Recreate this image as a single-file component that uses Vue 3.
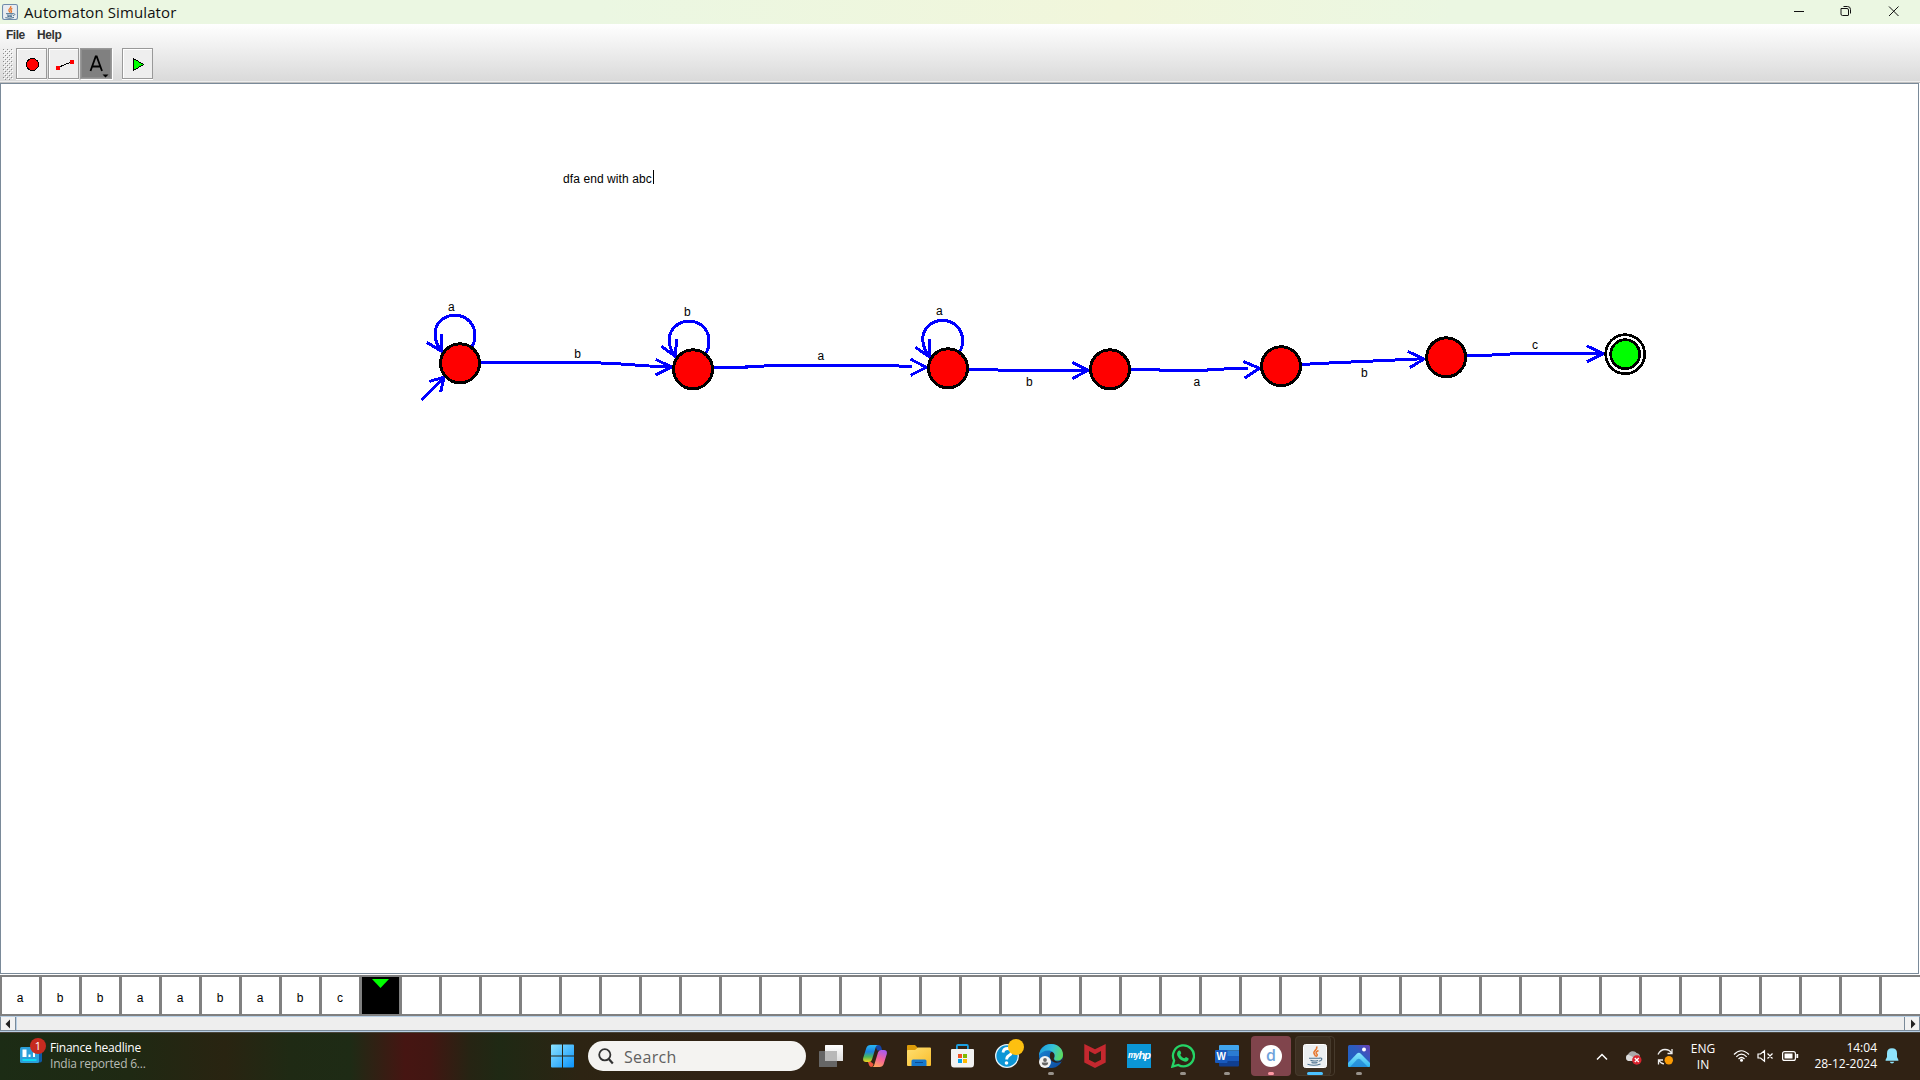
<script setup>
const nodes = [
  { x: 460, y: 363.3 },
  { x: 693, y: 369.3 },
  { x: 948, y: 368.3 },
  { x: 1110, y: 369.3 },
  { x: 1281, y: 366.2 },
  { x: 1446.2, y: 357.3 },
]

const edges = [
  'M481 362.4H586L614 363.5L650 366L672 367M656.5 359.4L672 367L656 375',
  'M714 367.6H747V366.5L779 365.6H890L913 366.6M911.3 359.2L927 367.3L911.3 375.3',
  'M969 369.4H993L1003 370.5H1088M1073 362.5L1088.5 370.3L1073 378.7',
  'M1131 369.4H1158L1162 370.5H1200L1228 368.8L1249 368.4M1244 361.5L1260 368.2L1245.5 378',
  'M1302 364.5L1326 363.2L1424.5 358.7M1408.6 351.5L1424.5 359L1410.5 367.7',
  'M1467 355.5H1484L1520 353.5H1604M1587.5 345.9L1604 353.7L1587.5 361.7',
  'M422.5 399.8L444.5 377.5M430 381.4L444.7 377.3L441.3 392.3',
]

const loops = [
  { x: 455.5, y: 335, head: 'M427.5 342.4L442.3 351.3L442.6 334.3' },
  { x: 689.7, y: 341, head: 'M662 346.2L676 356.3L677.3 339.3' },
  { x: 943.2, y: 340.2, head: 'M916 347.2L930 356.6L930.6 339.3' },
]

const labels = [
  { t: 'a', x: 448, y: 311 },
  { t: 'b', x: 574.3, y: 358 },
  { t: 'b', x: 684, y: 316 },
  { t: 'a', x: 817.5, y: 360 },
  { t: 'a', x: 936, y: 315 },
  { t: 'b', x: 1026, y: 386 },
  { t: 'a', x: 1193.5, y: 386 },
  { t: 'b', x: 1361, y: 377 },
  { t: 'c', x: 1532, y: 349 },
]

const tape = [...'abbaababc', 'head', ...Array(38).fill('')]
</script>

<template>
  <div class="screen">
    <header class="titlebar">
      <svg class="java" width="16" height="16" viewBox="0 0 24 24">
        <rect x=".8" y=".8" width="22.4" height="22.4" rx="2.5" fill="#e9edf1" stroke="#6f8cab" stroke-width="1.6" />
        <path d="M13 3c2 3-4 4-2.500 7 .5 1.200 1.500 1.800 1.200 3M15.500 6.500c-3 1.500-3 2.500-1.500 4 .8 1-.2 2-1 2.500" fill="none" stroke="#e8762c" stroke-width="2" />
        <path d="M6 14.500h11M7.500 16.500q4 1.200 8 0M8 18.500q4 1.200 7 0M5 20.500q7 2 13-.3M17 14.500c3-.5 3 2.500-.5 3" fill="none" stroke="#4d7390" stroke-width="1.500" />
      </svg>
      <span class="title">Automaton Simulator</span>
      <svg class="winctl" width="130" height="24" viewBox="0 0 130 24" fill="none" stroke="#111">
        <path d="M14 11.500h10" />
        <path d="M62.500 8.500h5q1.500 0 1.500 1.500v5q0 .5-.5.500h-5.500q-1.500 0-1.500-1.500v-5.500z" transform="translate(-.5 0)" />
        <path d="M63.500 6.500h4q3 0 3 3v4" />
        <path d="M109 6.500l9.500 9.500M118.500 6.500l-9.500 9.500" />
      </svg>
    </header>

    <div class="chrome">
      <nav class="menu"><span class="file">File</span><span class="help">Help</span></nav>
      <div class="toolbar">
        <svg class="grip" width="10" height="31" viewBox="0 0 10 31">
          <defs>
            <pattern id="dots" width="4" height="4" patternUnits="userSpaceOnUse">
              <rect width="1" height="1" fill="#8a8a8a" /><rect x="2" y="2" width="1" height="1" fill="#8a8a8a" />
              <rect x="1" y="1" width="1" height="1" fill="#fff" /><rect x="3" y="3" width="1" height="1" fill="#fff" />
            </pattern>
          </defs>
          <rect width="10" height="31" fill="url(#dots)" />
        </svg>
        <div class="tool">
          <svg width="29" height="29" viewBox="0 0 29 29"><circle cx="15.500" cy="15.500" r="6" fill="#f00" stroke="#000" shape-rendering="crispEdges" /></svg>
        </div>
        <div class="tool">
          <svg width="29" height="29" viewBox="0 0 29 29" shape-rendering="crispEdges">
            <path d="M9 18.500L22 13" stroke="#000" /><path d="M7 17h4v4h-4zM21 11h4v4h-4z" fill="#f00" />
          </svg>
        </div>
        <div class="tool on">
          <svg width="30" height="29" viewBox="0 0 30 29">
            <path d="M9.500 22L14.700 7.500h1L21 22M11.300 17.500h8" fill="none" stroke="#000" stroke-width="1.800" />
            <path d="M21.500 25.500h6l-3 3z" fill="#000" />
          </svg>
        </div>
        <div class="tool run">
          <svg width="29" height="29" viewBox="0 0 29 29"><path d="M10.500 9.500v12l10-6z" fill="#0f0" stroke="#000" shape-rendering="crispEdges" /></svg>
        </div>
      </div>
    </div>

    <main class="canvas">
      <svg width="1917" height="889" viewBox="1 84 1917 889">
        <g transform="translate(-.7 0)" fill="none" stroke="#00f" stroke-width="3" shape-rendering="crispEdges">
          <path v-for="(d, i) in edges" :key="i" :d="d" />
          <template v-for="(l, i) in loops" :key="'l' + i">
            <path d="M17 12Q20.500 6 19.800 0A19.800 18.500 0 1 0 -19.700 0Q-19.500 8 -13.500 16" :transform="`translate(${l.x} ${l.y})`" />
            <path :d="l.head" />
          </template>
        </g>
        <g stroke="#000" shape-rendering="crispEdges">
          <circle v-for="n in nodes" :key="n.x" :cx="n.x" :cy="n.y" r="19.500" fill="#f00" stroke-width="3" />
          <circle cx="1625.200" cy="354.200" r="19.500" fill="#fff" stroke-width="2.700" />
          <circle cx="1625.200" cy="354.200" r="14.500" fill="#0f0" stroke-width="2.700" />
        </g>
        <g class="label">
          <text v-for="l in labels" :key="l.x" :x="l.x" :y="l.y">{{ l.t }}</text>
          <text x="563" y="183" class="note">dfa end with abc</text>
        </g>
        <path d="M653.500 170v14" stroke="#000" />
      </svg>
    </main>

    <div class="tape">
      <div v-for="(c, i) in tape" :key="i" class="cell" :class="{ head: c === 'head' }">
        <svg v-if="c === 'head'" width="17" height="9" viewBox="0 0 17 9"><path d="M0 0h17L8.500 9z" fill="#0f0" /></svg>
        <span v-else>{{ c }}</span>
      </div>
    </div>

    <div class="scroll">
      <svg width="14" height="13" viewBox="0 0 14 13"><path d="M9 2.500v9L4.500 7z" fill="#222" /></svg>
      <div class="track"></div>
      <svg width="14" height="13" viewBox="0 0 14 13"><path d="M6 2.500v9l4.500-4.500z" fill="#222" /></svg>
    </div>

    <footer class="taskbar">
      <div class="news">
        <svg width="30" height="28" viewBox="0 0 30 28">
          <path d="M16 10h6v12.500q0 2-2 2h-3z" fill="#0c59a4" />
          <rect x="0" y="9" width="19" height="16" rx="1.500" fill="#2b9fd9" />
          <path d="M2.500 11.500h4v7.500h-4zM8.500 16.500h2v2.500h-2zM13 14.500h2v4.500h-2z" fill="#fff" />
          <path d="M2.500 21h14v2h-14z" fill="#0ddcf5" />
          <circle cx="18" cy="8" r="8" fill="#c62b20" />
          <text x="18" y="12" text-anchor="middle" class="badge">1</text>
        </svg>
        <div class="newstext"><span class="n1">Finance headline</span><span class="n2">India reported 6...</span></div>
      </div>

      <div class="apps">
        <div class="app">
          <svg width="24" height="24" viewBox="0 0 24 24">
            <defs><linearGradient id="win" x1="0" y1="0" x2="1" y2="1"><stop offset="0" stop-color="#8ce3ff" /><stop offset="1" stop-color="#0a93fb" /></linearGradient></defs>
            <path d="M0 1.500q0-1 1-1h10v11H0zM12 .5h10q1 0 1 1v10H12zM0 12.500h11v11H1q-1 0-1-1zM12 12.500h11v10q0 1-1 1H12z" fill="url(#win)" />
          </svg>
        </div>
        <div class="search">
          <svg width="16" height="17" viewBox="0 0 16 17" fill="none" stroke="#333" stroke-width="1.800"><circle cx="6.800" cy="6.800" r="5.600" /><path d="M10.800 11l4 4.500" stroke-width="2.200" /></svg>
          <span>Search</span>
        </div>
        <div class="app">
          <svg width="24" height="24" viewBox="0 0 24 24">
            <defs><linearGradient id="tv" x1="0" y1="0" x2="0" y2="1"><stop offset="0" stop-color="#fff" /><stop offset="1" stop-color="#ddd" /></linearGradient></defs>
            <rect x="6" y="1" width="18" height="16" rx=".5" fill="url(#tv)" /><rect x="0" y="7" width="18" height="16" rx=".5" fill="#666" />
            <rect x="6" y="7" width="12" height="10" fill="#b8b8b8" />
          </svg>
        </div>
        <div class="app">
          <svg width="24" height="24" viewBox="0 0 24 24">
            <defs>
              <linearGradient id="cp1" x1=".3" y1="0" x2=".3" y2="1"><stop offset="0" stop-color="#28b7f5" /><stop offset=".4" stop-color="#1c84e0" /><stop offset=".7" stop-color="#4cb95a" /><stop offset="1" stop-color="#f5d31c" /></linearGradient>
              <linearGradient id="cp2" x1=".7" y1="0" x2=".3" y2="1"><stop offset="0" stop-color="#a95bf0" /><stop offset=".5" stop-color="#f4629b" /><stop offset="1" stop-color="#ffa55c" /></linearGradient>
            </defs>
            <path d="M12 1h3.500q2 0 2.700 2l1 3.500h-5z" fill="#1545a8" />
            <path d="M7.500 1h8c-2 0-2.500 1-3 3L9 15.500q-.7 2.500-3 2.500H3Q-.5 18 .2 14L3.300 4Q4.300 1 7.500 1z" fill="url(#cp1)" />
            <path d="M16.500 23h-8c2 0 2.500-1 3-3L15 8.500Q15.700 6 18 6h3q3.500 0 2.800 4l-3.100 10q-1 3-4.200 3z" fill="url(#cp2)" />
            <path d="M5 18h3l2.500 2q-.5 3-2.500 3-1.500-.3-2-2z" fill="#f0563e" />
          </svg>
        </div>
        <div class="app">
          <svg width="24" height="24" viewBox="0 0 24 24">
            <defs><linearGradient id="fo" x1="0" y1="0" x2="1" y2="1"><stop offset="0" stop-color="#ffdf70" /><stop offset="1" stop-color="#f9bd2d" /></linearGradient></defs>
            <path d="M0 2q0-1 1-1h7l3 3v5H0z" fill="#dd9c09" />
            <path d="M0 7q0-1 1-1h7l3-2.500h12q1 0 1 1V21q0 1-1 1H1q-1 0-1-1z" fill="url(#fo)" />
            <path d="M4.500 17q0-1.500 1.500-1.500h12q1.500 0 1.500 1.500v5h-15z" fill="#1679ce" /><path d="M8 18.500h8" stroke="#0d4d92" />
          </svg>
        </div>
        <div class="app">
          <svg width="24" height="24" viewBox="0 0 24 24">
            <path d="M5.900 6V2q0-1 1-1h9q1 0 1 1v4" fill="none" stroke="#1ba0e2" stroke-width="1.800" />
            <path d="M0 6q0-1 1-1h21q1 0 1 1v14q0 3.500-3 3.500H3q-3 0-3-3.500z" fill="#f2f2f2" />
            <path d="M7 10h4v4H7z" fill="#f25022" /><path d="M12 10h4v4h-4z" fill="#7fba00" /><path d="M7 15h4v4H7z" fill="#00a4ef" /><path d="M12 15h4v4h-4z" fill="#ffb900" />
          </svg>
        </div>
        <div class="app">
          <svg class="over" width="30" height="30" viewBox="0 0 30 30">
            <circle cx="12" cy="17" r="11.300" fill="#0d96d6" stroke="#e8f4fa" stroke-width="1.300" />
            <path d="M8 13.500q.5-4 4.500-4t4 3.500q0 2-2.500 3.500t-2.300 4" fill="none" stroke="#fff" stroke-width="2.800" /><circle cx="11.500" cy="24" r="1.800" fill="#fff" />
            <circle cx="21" cy="8" r="8" fill="#fdc010" />
          </svg>
        </div>
        <div class="app">
          <svg width="24" height="24" viewBox="0 0 24 24">
            <defs>
              <linearGradient id="ed1" x1="0" y1=".3" x2="1" y2=".6"><stop offset="0" stop-color="#1c9de0" /><stop offset=".5" stop-color="#35c1d8" /><stop offset="1" stop-color="#5edb5a" /></linearGradient>
              <linearGradient id="ed2" x1="0" y1="0" x2="1" y2="1"><stop offset="0" stop-color="#1b8ad8" /><stop offset="1" stop-color="#0c469c" /></linearGradient>
            </defs>
            <circle cx="12" cy="12" r="12" fill="url(#ed2)" />
            <path d="M12 8q4 0 3.500 4.500Q13 16 18 17.500q4 .5 6-4.500-.500 2-1.200 4.500-3 1.500-7 1-5-1.500-5-6.500 0-3 1.200-4z" fill="#2e2116" />
            <path d="M0 11.500C.5 4.500 6 0 12 0c7 0 12 5 12 10.500 0 4-2.500 6-5.500 6-4 0-3.500-2-2.800-3.500C16.500 9 13 6.500 9 6.500S1.500 8.500 0 11.500z" fill="url(#ed1)" />
            <circle cx="6" cy="18" r="6" fill="#f2f2f2" /><circle cx="6" cy="16" r="1.900" fill="#666" /><path d="M2.800 18.500h6.400q0 3-3.200 3t-3.200-3z" fill="#666" />
          </svg>
          <i class="dot"></i>
        </div>
        <div class="app">
          <svg width="24" height="24" viewBox="0 0 24 24"><path d="M1.300 0L12 5.200 22.700 0v18.500L12 24 1.300 18.500zM6 7v8.800l6 3 6-3V7l-6 3.200z" fill="#c5282f" fill-rule="evenodd" /></svg>
        </div>
        <div class="app">
          <div class="hp"><span class="my">my</span><span class="hpp">hp</span></div>
        </div>
        <div class="app">
          <svg width="24" height="24" viewBox="0 0 24 24">
            <path d="M1.400 22.600l1.700-6A10.500 10.500 0 1 1 7.300 21z" fill="none" stroke="#25d366" stroke-width="2.300" />
            <path d="M8 6.500c.6-.3 1.200 0 1.500.8l.7 1.700c.1.600-.8 1.400-.9 1.700.8 1.700 2.200 2.900 4 3.600.5 0 1.200-1.300 1.700-1.300l2.400 1.200c.6.500 0 2-.6 2.600-1.300 1.100-3 1-4.700.3-2.800-1.100-5-3.400-5.900-5.800C5.700 9.200 6.500 7.300 8 6.500z" fill="#25d366" />
          </svg>
          <i class="dot"></i>
        </div>
        <div class="app">
          <svg width="24" height="24" viewBox="0 0 24 24">
            <path d="M4 2q0-1 1-1h18q1 0 1 1v4.500H4z" fill="#41a5ee" /><path d="M4 6.500h20V12H4z" fill="#2b7cd3" /><path d="M4 12h20v5H4z" fill="#185abd" /><path d="M4 17h20v4.500q0 1-1 1H5q-1 0-1-1z" fill="#103f91" />
            <rect x="0" y="6" width="12.500" height="13" rx="1" fill="#185abd" />
            <text x="6.200" y="16.200" text-anchor="middle" class="w">W</text>
          </svg>
          <i class="dot"></i>
        </div>
        <div class="app">
          <div class="pinned"><span class="d">d</span></div>
          <i class="dot pink"></i>
        </div>
        <div class="app">
          <div class="group"></div><div class="group active"></div>
          <svg class="front" width="24" height="24" viewBox="0 0 24 24">
            <rect x=".5" y=".5" width="23" height="23" rx="2" fill="#eceff1" stroke="#fff" />
            <path d="M13.500 2.500c2 3-4 4.500-2.500 7 .7 1.200 1.500 1.500 1.200 3M15.500 6.500c-3 1.500-3 2.500-1.500 3.800.8 1-.2 1.700-1 2.200" fill="none" stroke="#e8762c" stroke-width="1.500" />
            <path d="M6 14.300h11M7.500 16.400q4 1.200 7.500 0M8.500 18.400q3 1 6 0M4.500 20.300q7 2 13-.3M16.500 14c3.500-.6 3 2.800-.8 3.300" fill="none" stroke="#4d7390" stroke-width="1.100" />
          </svg>
          <i class="dot blue"></i>
        </div>
        <div class="app">
          <svg width="24" height="24" viewBox="0 0 24 24">
            <defs>
              <linearGradient id="ph" x1="0" y1="1" x2="1" y2="0"><stop offset="0" stop-color="#1a62c4" /><stop offset=".6" stop-color="#2d5cc0" /><stop offset="1" stop-color="#6b3fb5" /></linearGradient>
              <linearGradient id="ph2" x1="0" y1="0" x2="0" y2="1"><stop offset="0" stop-color="#8ae6fb" /><stop offset="1" stop-color="#2fb5f0" /></linearGradient>
            </defs>
            <rect x="1" y="1" width="22" height="22" rx="1.500" fill="url(#ph)" />
            <path d="M1 19L9.800 9.700q2-1.700 4 0L23 19v3q0 1-1 1H2q-1 0-1-1z" fill="url(#ph2)" /><path d="M3 23l7-7.500q1.800-1.500 3.500 0L21 23z" fill="#1d7dd0" opacity=".7" />
            <circle cx="17" cy="5.500" r="2" fill="#fff" />
          </svg>
          <i class="dot"></i>
        </div>
      </div>

      <div class="tray">
        <svg class="chev" width="12" height="8" viewBox="0 0 12 8"><path d="M1 6.500L6 1.500l5 5" fill="none" stroke="#fff" stroke-width="1.500" /></svg>
        <svg class="cloud" width="17" height="16" viewBox="0 0 17 16">
          <path d="M3.500 12A3.500 3.500 0 0 1 3 5.500 5 5 0 0 1 11.500 4 4 4 0 0 1 15 8v4z" fill="#aaa" /><path d="M3.500 12A3.500 3.500 0 0 1 3 5.500L10 9v3z" fill="#ddd" />
          <circle cx="11.800" cy="11" r="4.700" fill="#d9232e" /><path d="M9.800 9l4 4M13.800 9l-4 4" stroke="#fff" stroke-width="1.300" />
        </svg>
        <svg class="sync" width="17" height="17" viewBox="0 0 17 17" fill="none" stroke="#eee" stroke-width="1.300">
          <path d="M1 6.500Q3.500 1.500 8 1.500t6.500 3.500M15 1v4.500h-4.500M1.500 16.500v-4.500h4.500M2 12.500q2 3.300 5 3.300" /><circle cx="11.800" cy="12.300" r="4.200" fill="#fb9b04" stroke="none" />
        </svg>
        <div class="lang"><span>ENG</span><span>IN</span></div>
        <svg class="status" width="66" height="16" viewBox="0 0 66 16" fill="none" stroke="#fff" stroke-width="1.200">
          <path d="M1 6.500q7-7.500 15 0M3.300 8.800q5.200-5.200 10.400 0M5.500 11q3-3 6 0" /><circle cx="8.500" cy="12.200" r="1.500" fill="#fff" stroke="none" />
          <path d="M25 6h2.500L31.500 2.800v10.400L27.500 10H25zM34.500 5.500l5 5M39.500 5.500l-5 5" />
          <rect x="49.600" y="3.600" width="12.800" height="8.800" rx="2" /><rect x="51.500" y="5.500" width="8" height="5" fill="#fff" stroke="none" /><path d="M64.300 6v4" stroke-width="1.800" />
        </svg>
        <div class="clock"><span>14:04</span><span>28-12-2024</span></div>
        <svg class="bell" width="14" height="16" viewBox="0 0 14 16"><path d="M7 .3q5 0 5 5V9l1.500 3q.2.800-.5.800H1q-.7 0-.5-.8L2 9V5.300q0-5 5-5zM4.800 13.700h4.400q-.5 1.800-2.200 1.800t-2.200-1.800z" fill="#8fe3fb" /></svg>
      </div>
    </footer>
  </div>
</template>

<style>
body {
  margin: 0;
}
</style>

<style scoped>
.screen {
  width: 1920px;
  height: 1080px;
  overflow: hidden;
  display: flex;
  flex-direction: column;
  background: #fff;
  font-family: "Liberation Sans", sans-serif;
}
svg {
  display: block;
  flex: none;
}
.titlebar {
  height: 24px;
  flex: none;
  display: flex;
  align-items: center;
  background: linear-gradient(90deg, #ebf7e2 0, #ebf7e2 600px, #f1f6db 1120px, #ebf7e2 1450px);
}
.java {
  margin-left: 2px;
}
.title {
  margin-left: 6px;
  font: 15px/24px "Open Sans", sans-serif;
  letter-spacing: 0.1px;
  color: #111;
  flex: 1;
}
.winctl {
  margin-right: 10px;
}
.chrome {
  height: 59px;
  flex: none;
  box-sizing: border-box;
  border-bottom: 1px solid #c0c0c0;
  background: linear-gradient(#eee, #eee) bottom / 100% 1px no-repeat, linear-gradient(#fff, #d9d9d9);
}
.menu {
  height: 24px;
  font-size: 12px;
  line-height: 22px;
  font-weight: bold;
  color: #333;
  display: flex;
}
.file {
  margin-left: 6px;
  width: 31px;
  letter-spacing: -0.5px;
}
.help {
  letter-spacing: -0.4px;
}
.toolbar {
  display: flex;
  height: 31px;
}
.grip {
  margin: 1px 3px 0;
}
.tool {
  width: 29px;
  height: 29px;
  border: 1px solid #999;
  background: #eee;
  box-shadow: inset 1px 1px #fff, 0 1px #fff;
  margin-right: 1px;
}
.tool.on {
  width: 30px;
  background: #808080;
  box-shadow: inset 0 0 0 1px #8e8e8e, 1px 1px #fff;
}
.tool.run {
  margin-left: 9px;
}
.canvas {
  width: 1917px;
  height: 889px;
  flex: none;
  border: 1px solid #7a8a99;
  margin-bottom: 1px;
}
.label {
  font: 12px "Liberation Sans", sans-serif;
  fill: #000;
}
.note {
  letter-spacing: 0.09px;
}
.tape {
  height: 37px;
  flex: none;
  border: solid #808080;
  border-width: 2px 0 2px 2px;
  display: flex;
  overflow: hidden;
}
.cell {
  width: 37px;
  flex: none;
  border-right: 3px solid #808080;
  display: flex;
  justify-content: center;
  font-size: 12px;
  line-height: 43px;
}
.cell span {
  margin-right: 1px;
}
.cell:last-child {
  border-right: 0;
}
.cell.head {
  background: #000;
  align-items: flex-start;
}
.cell.head svg {
  margin-top: 2px;
}
.scroll {
  height: 13px;
  flex: none;
  border: 1px solid #7a8a99;
  border-top-color: #b8cfe5;
  box-shadow: 0 1px #b8cfe5;
  margin-bottom: 1px;
  display: flex;
  background: #f2f2f2;
}
.track {
  flex: 1;
  background: #eee;
  border: solid #7a8a99;
  border-width: 0 1px;
  box-shadow: inset 1px 0 #b8cfe5;
}
.taskbar {
  height: 48px;
  flex: none;
  display: flex;
  color: #fff;
  font-family: "Open Sans", sans-serif;
  font-size: 12px;
  line-height: 16px;
  background: linear-gradient(90deg, #1c2c15 0, #1f2913 130px, #292411 225px, #1f2a14 290px, #1e2b15 350px, #461512 405px, #421612 430px, #262413 470px, #1f2914 500px, #2d2413 580px, #302214 700px, #302214);
  box-shadow: inset 0 1px #4a443a;
}
.news {
  width: 541px;
  display: flex;
}
.news svg {
  margin: 6px 0 0 20px;
}
.badge {
  font-size: 11px;
  fill: #fff;
}
.newstext {
  display: flex;
  flex-direction: column;
  padding-top: 8px;
}
.n1 {
  letter-spacing: -0.22px;
}
.n2 {
  color: #b9bcb5;
  letter-spacing: -0.22px;
}
.apps {
  display: flex;
}
.app {
  width: 44px;
  height: 48px;
  display: flex;
  align-items: center;
  justify-content: center;
  position: relative;
}
.over {
  position: absolute;
  left: 10px;
  top: 7px;
}
.search {
  width: 218px;
  height: 30px;
  border-radius: 15px;
  margin: 9px 3px 0;
  background: #f4f3f1;
  display: flex;
  align-items: center;
  font-size: 16px;
  letter-spacing: 0.35px;
  color: #606060;
}
.search svg {
  margin: 0 10px 0 10px;
}
.search span {
  padding-top: 2px;
}
.dot {
  position: absolute;
  left: 19px;
  top: 40px;
  width: 6px;
  height: 3px;
  border-radius: 2px;
  background: #98928b;
}
.dot.pink {
  background: #ff99a4;
}
.dot.blue {
  left: 14px;
  width: 16px;
  background: #4cc2ff;
}
.hp {
  width: 24px;
  height: 24px;
  background: #0b96d6;
  display: flex;
  justify-content: center;
  line-height: 23px;
  font-style: italic;
  font-family: "Liberation Sans", sans-serif;
  letter-spacing: -0.9px;
}
.my {
  font-size: 8.5px;
  font-weight: bold;
}
.hpp {
  font-size: 11px;
  font-weight: bold;
}
.w {
  font: bold 10px "Liberation Sans", sans-serif;
  fill: #fff;
}
.pinned {
  width: 40px;
  height: 40px;
  border-radius: 4px;
  background: #80444c;
  display: flex;
  align-items: center;
  justify-content: center;
}
.d {
  width: 22px;
  height: 22px;
  border-radius: 50%;
  background: #fff;
  color: #6fa3dc;
  font-weight: 600;
  font-size: 16px;
  line-height: 21px;
  text-align: center;
}
.group {
  position: absolute;
  left: 2px;
  top: 4px;
  width: 40px;
  height: 40px;
  box-sizing: border-box;
  border: 1px solid #463a2c;
  border-radius: 4px;
}
.active {
  width: 36px;
  background: #3d3022;
}
.front {
  position: relative;
}
.tray {
  flex: 1;
  display: flex;
}
.tray svg {
  margin-top: 21px;
}
.tray .chev {
  margin-left: 215px;
}
.tray .cloud {
  margin: 17px 0 0 17px;
}
.tray .sync {
  margin: 16px 0 0 15px;
}
.lang {
  width: 50px;
  margin-left: 4px;
  padding-top: 9px;
  display: flex;
  flex-direction: column;
  align-items: center;
}
.tray .status {
  margin: 16px 0 0 5px;
}
.clock {
  width: 78px;
  display: flex;
  flex-direction: column;
  align-items: flex-end;
  padding-top: 8px;
}
.tray .bell {
  margin: 16px 0 0 8px;
}
</style>
